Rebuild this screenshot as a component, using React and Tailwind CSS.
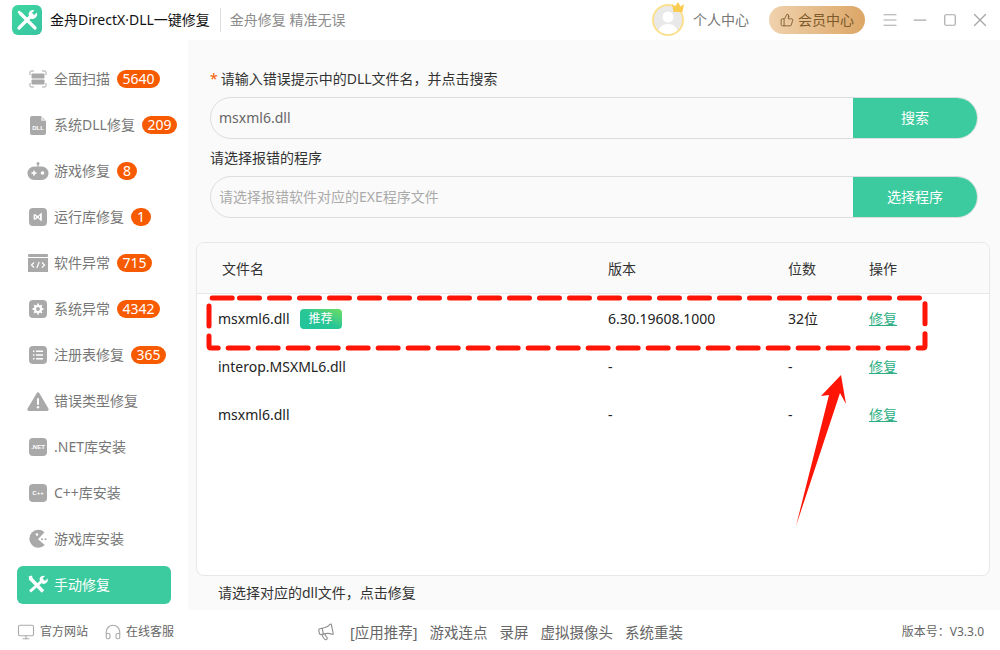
import { Menu, Minus, Square, X, ThumbsUp, Headphones, Monitor, Megaphone } from 'lucide-react'

const GRAY = '#a9a9a9'

// ── sidebar icons, all on an 18x18 box ────────────────────────────
const ScanIcon = () => (
  <svg width="18" height="18" viewBox="0 0 18 18" fill="none">
    <path d="M1 5V2a1 1 0 0 1 1-1h3M13 1h3a1 1 0 0 1 1 1v3M17 13v3a1 1 0 0 1-1 1h-3M5 17H2a1 1 0 0 1-1-1v-3" stroke={GRAY} strokeWidth="1" />
    <rect x="2.5" y="3.5" width="13" height="5" rx="1" fill={GRAY} />
    <rect x="2.5" y="9.5" width="13" height="5" rx="1" fill={GRAY} />
  </svg>
)
const DllIcon = () => (
  <svg width="18" height="20" viewBox="0 0 18 20">
    <path d="M3 1h9l5 5v12a2 2 0 0 1-2 2H3a2 2 0 0 1-2-2V3a2 2 0 0 1 2-2z" fill={GRAY} />
    <path d="M12 1v4a1 1 0 0 0 1 1h4z" fill="#dcdcdc" />
    <text x="9" y="15" textAnchor="middle" fontSize="6" fontWeight="700" fill="#fff" fontFamily="Liberation Sans, sans-serif">DLL</text>
  </svg>
)
const GameIcon = () => (
  <svg width="22" height="20" viewBox="0 0 22 20">
    <circle cx="11" cy="2.5" r="1.5" fill={GRAY} />
    <rect x="10.4" y="3" width="1.2" height="4" fill={GRAY} />
    <rect x="0.5" y="5.5" width="21" height="13.5" rx="6.7" fill={GRAY} />
    <rect x="4.5" y="11.3" width="5" height="1.6" fill="#fff" />
    <rect x="6.2" y="9.6" width="1.6" height="5" fill="#fff" />
    <circle cx="15.5" cy="12" r="1.8" fill="#fff" />
  </svg>
)
const RuntimeIcon = () => (
  <svg width="18" height="18" viewBox="0 0 18 18">
    <rect width="18" height="18" rx="4" fill={GRAY} />
    <path d="M12.8 4.5v9L8.6 9.9 6 12 4.6 11.2V6.8L6 6l2.6 2.1zM6 7.8v2.4L7.4 9zM11 7.2 9.6 9l1.4 1.8z" fill="#fff" fillRule="evenodd" />
  </svg>
)
const CodeIcon = () => (
  <svg width="20" height="18" viewBox="0 0 20 18">
    <rect x="0" y="0" width="20" height="3" rx="1" fill={GRAY} />
    <rect x="0" y="4" width="20" height="14" fill={GRAY} />
    <path d="M6 8.5 3.5 11 6 13.5M14 8.5l2.5 2.5-2.5 2.5M11.2 8l-2.4 6" stroke="#fff" strokeWidth="1.2" fill="none" />
  </svg>
)
const GearIcon = () => (
  <svg width="18" height="18" viewBox="0 0 18 18">
    <rect width="18" height="18" rx="4" fill={GRAY} />
    <circle cx="9" cy="9" r="3" fill="none" stroke="#fff" strokeWidth="2.2" />
    <path d="M9 3.6v2M9 12.4v2M3.6 9h2M12.4 9h2M5.2 5.2l1.4 1.4M11.4 11.4l1.4 1.4M12.8 5.2l-1.4 1.4M6.6 11.4l-1.4 1.4" stroke="#fff" strokeWidth="1.8" />
  </svg>
)
const ListIcon = () => (
  <svg width="18" height="18" viewBox="0 0 18 18">
    <rect width="18" height="18" rx="4" fill={GRAY} />
    <path d="M7 5.2h7M7 9h7M7 12.8h7" stroke="#fff" strokeWidth="1.4" />
    <path d="M4 5.2h1.4M4 9h1.4M4 12.8h1.4" stroke="#fff" strokeWidth="1.4" />
  </svg>
)
const WarnIcon = () => (
  <svg width="22" height="19" viewBox="0 0 22 19">
    <path d="M9.6 1.2a1.6 1.6 0 0 1 2.8 0l9 15.4a1.6 1.6 0 0 1-1.4 2.4H2a1.6 1.6 0 0 1-1.4-2.4z" fill={GRAY} />
    <rect x="10" y="6" width="2" height="7" rx="1" fill="#fff" />
    <circle cx="11" cy="15.3" r="1.2" fill="#fff" />
  </svg>
)
const LabelIcon = ({ text }) => (
  <svg width="18" height="18" viewBox="0 0 18 18">
    <rect width="18" height="18" rx="4" fill={GRAY} />
    <text x="9" y="11.2" textAnchor="middle" fontSize="6" fontWeight="700" fill="#fff" fontFamily="Liberation Sans, sans-serif">{text}</text>
  </svg>
)
const PacmanIcon = () => (
  <svg width="20" height="20" viewBox="0 0 20 20">
    <path d="M16.5 3.2A9 9 0 1 0 16.8 16L10 10.2z" fill={GRAY} />
    <circle cx="9" cy="5.5" r="1.3" fill="#fff" />
    <circle cx="14" cy="10.3" r="1" fill={GRAY} />
    <circle cx="17.5" cy="10.3" r="1" fill={GRAY} />
  </svg>
)
const ToolsIcon = () => (
  <svg width="22" height="20" viewBox="0 0 22 20" fill="none">
    <path d="M3 16.5 16 5" stroke="#fff" strokeWidth="3" />
    <path d="M12.5 4.5a4 4 0 0 1 5.5-3.5L15.5 3.5l2.5 2.500L20.500 3.500a4 4 0 0 1-5.500 5z" fill="#fff" />
    <path d="M3 3l13 13.500" stroke="#fff" strokeWidth="3.400" />
    <path d="M1.500 1.500 5 0.500 6 5 3 6z" fill="#fff" />
  </svg>
)

const NAV = [
  { label: '全面扫描', icon: <ScanIcon />, badge: '5640' },
  { label: '系统DLL修复', icon: <DllIcon />, badge: '209' },
  { label: '游戏修复', icon: <GameIcon />, badge: '8' },
  { label: '运行库修复', icon: <RuntimeIcon />, badge: '1' },
  { label: '软件异常', icon: <CodeIcon />, badge: '715' },
  { label: '系统异常', icon: <GearIcon />, badge: '4342' },
  { label: '注册表修复', icon: <ListIcon />, badge: '365' },
  { label: '错误类型修复', icon: <WarnIcon /> },
  { label: '.NET库安装', icon: <LabelIcon text=".NET" /> },
  { label: 'C++库安装', icon: <LabelIcon text="C++" /> },
  { label: '游戏库安装', icon: <PacmanIcon /> },
]

const ROWS = [
  { name: 'msxml6.dll', tag: true, version: '6.30.19608.1000', bits: '32位' },
  { name: 'interop.MSXML6.dll', version: '-', bits: '-' },
  { name: 'msxml6.dll', version: '-', bits: '-' },
]

function SearchRow({ value, placeholder, action }) {
  return (
    <div className="flex h-[42px] items-stretch overflow-hidden rounded-full border border-[#dddddd] bg-[#fafafa]">
      <input
        readOnly
        value={value}
        placeholder={placeholder}
        className="min-w-0 flex-1 bg-transparent pl-2 text-sm text-[#666666] outline-none placeholder:text-[#aaaaaa]"
      />
      <button className="w-[124px] bg-[#3ccb9e] text-sm text-white">{action}</button>
    </div>
  )
}

export default function App() {
  return (
    <div className="relative flex h-[650px] w-[1000px] flex-col overflow-hidden bg-white font-['Noto_Sans','Noto_Sans_CJK_SC',sans-serif] text-sm">
      {/* Title bar */}
      <header className="flex h-10 shrink-0 items-center pl-3 pr-[9px]">
        <div className="flex h-[30px] w-[30px] items-center justify-center rounded-md bg-gradient-to-br from-[#3ed6a0] to-[#39c4a2]">
          <svg width="22" height="22" viewBox="0 0 22 22" fill="none">
            <path d="M3 19 16 6" stroke="#fff" strokeWidth="3.200" strokeLinecap="round" />
            <path d="M12.500 5.500a4.500 4.500 0 0 1 6-4.200L15.800 4l2.200 2.200 2.700-2.700a4.500 4.500 0 0 1-6 6z" fill="#fff" />
            <path d="M5 5l14 14" stroke="#fff" strokeWidth="3.200" strokeLinecap="round" />
            <path d="M1.500 3 3 1.500 7 4.500 4.500 7z" fill="#fff" />
          </svg>
        </div>
        <span className="ml-2 text-[#111111]">金舟DirectX·DLL一键修复</span>
        <span className="ml-[10px] h-6 w-px bg-[#dddddd]" />
        <span className="ml-[9px] text-[#8c8c8c]">金舟修复 精准无误</span>

        <div className="relative ml-auto h-8 w-8 rounded-full border-2 border-[#fbe08d] bg-[#e9e9e9]">
          <svg width="28" height="28" viewBox="0 0 28 28" className="rounded-full">
            <circle cx="14" cy="11" r="5.500" fill="#fff" />
            <path d="M4 28c0-7 5-10 10-10s10 3 10 10z" fill="#fff" />
          </svg>
          <svg width="14" height="12" viewBox="0 0 14 12" className="absolute -right-[3px] -top-[5px]">
            <path d="M1 3l3 2.500L7 1l2.500 4.500L13 3l-1.500 8h-9z" fill="#f9cd52" />
          </svg>
        </div>
        <span className="ml-[9px] text-[#777777]">个人中心</span>
        <div className="ml-5 flex h-7 w-24 items-center justify-center gap-1 rounded-full bg-gradient-to-r from-[#f0d2ad] to-[#dca666] text-[#7c5a2b]">
          <ThumbsUp size={14} strokeWidth={1.500} />
          <span>会员中心</span>
        </div>
        <Menu size={18} strokeWidth={1.500} className="ml-4 text-[#a8a8a8]" />
        <Minus size={20} strokeWidth={1.500} className="ml-[11px] text-[#a8a8a8]" />
        <Square size={14} strokeWidth={2} className="ml-[13px] text-[#a8a8a8]" />
        <X size={22} strokeWidth={1.500} className="ml-3 text-[#a8a8a8]" />
      </header>

      <div className="flex min-h-0 flex-1">
        {/* Sidebar */}
        <aside className="flex w-[188px] shrink-0 flex-col pl-[17px] pt-4">
          {NAV.map(n => (
            <div key={n.label} className="flex h-[46px] items-center text-[#777777]">
              <span className="flex w-[37px] shrink-0 justify-center pl-[5px]">{n.icon}</span>
              {n.label}
              {n.badge && (
                <span className="ml-[7px] flex h-[18px] min-w-5 items-center justify-center rounded-full bg-[#f85a00] px-[5.5px] text-sm text-white">
                  {n.badge}
                </span>
              )}
            </div>
          ))}
          <div className="mt-1 flex h-[38px] w-[154px] items-center rounded-md bg-[#3ccb9e] text-white">
            <span className="flex w-[37px] shrink-0 justify-center pl-[5px]"><ToolsIcon /></span>
            手动修复
          </div>
        </aside>

        {/* Main */}
        <main className="flex min-w-0 flex-1 flex-col bg-[#fafafa] pl-2 pr-[10px]">
          <div className="pl-[14px] pr-3 pt-[29px]">
            <div className="flex h-5 items-center text-[#333333]">
              <span className="mr-[3px] text-[#f85a00]">*</span>请输入错误提示中的DLL文件名，并点击搜索
            </div>
            <div className="mt-2">
              <SearchRow value="msxml6.dll" action="搜索" />
            </div>
            <div className="mt-[9px] flex h-5 items-center text-[#333333]">请选择报错的程序</div>
            <div className="mt-2">
              <SearchRow value="" placeholder="请选择报错软件对应的EXE程序文件" action="选择程序" />
            </div>
          </div>

          <div className="mt-6 flex h-[334px] flex-col overflow-hidden rounded-lg border border-[#e8e8e8] bg-white">
            <div className="flex h-[51px] shrink-0 items-center border-b border-[#e8e8e8] bg-[#fafafa] pt-px text-[#333333]">
              <span className="w-[411px] pl-[25px]">文件名</span>
              <span className="w-[180px]">版本</span>
              <span className="w-[81px]">位数</span>
              <span>操作</span>
            </div>
            {ROWS.map((r, i) => (
              <div key={i} className="flex h-12 shrink-0 items-center pt-[2px] text-[#222222]">
                <span className="flex w-[411px] items-center pl-[21px]">
                  {r.name}
                  {r.tag && (
                    <span className="ml-[10px] flex h-5 w-[42px] items-center justify-center rounded bg-gradient-to-tr from-[#20c39b] via-[#28c695] to-[#6ade5c] text-xs text-white">推荐</span>
                  )}
                </span>
                <span className="w-[180px]">{r.version}</span>
                <span className="w-[81px]">{r.bits}</span>
                <a className="text-[#2eae85] underline">修复</a>
              </div>
            ))}
          </div>

          <div className="flex h-[34px] items-center pl-[22px] text-[#333333]">请选择对应的dll文件，点击修复</div>
        </main>
      </div>

      {/* Footer */}
      <footer className="flex h-10 shrink-0 items-center pt-1 text-[#666666]">
        <div className="flex w-[299px] items-center pl-[17px] text-xs">
          <Monitor size={18} strokeWidth={1.500} className="text-[#aaaaaa]" />
          <span className="ml-[5px]">官方网站</span>
          <Headphones size={18} strokeWidth={1.500} className="ml-4 text-[#aaaaaa]" />
          <span className="ml-[4px]">在线客服</span>
        </div>
        <Megaphone size={18} strokeWidth={1.500} className="ml-[18px] -rotate-12 text-[#8f8f8f]" />
        <div className="ml-[15px] flex items-center gap-3 text-[14.5px]">
          <span>[应用推荐]</span>
          <span>游戏连点</span>
          <span>录屏</span>
          <span>虚拟摄像头</span>
          <span>系统重装</span>
        </div>
        <span className="ml-auto pr-4 text-xs">版本号：V3.3.0</span>
      </footer>

      {/* Red annotation drawn over the table */}
      <svg width="1000" height="650" viewBox="0 0 1000 650" className="pointer-events-none absolute left-0 top-0" fill="none">
        <path
          d="M239.500 298H923Q925 298 925 300V346Q925 348 923 348H211Q209 348 209 346V300Q209 298 211 298H239.500"
          stroke="#fe1506"
          strokeWidth="5"
          strokeLinecap="round"
          strokeDasharray="20 10"
        />
        <path d="M841 375 846 404 840 393 796 526 829 395 821 396Z" fill="#fe1506" />
      </svg>
    </div>
  )
}
